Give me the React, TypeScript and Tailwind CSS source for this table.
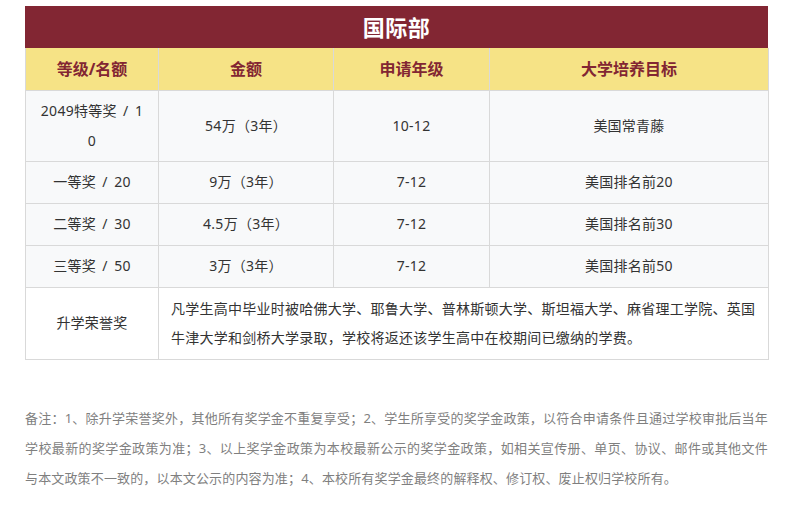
const FONT = { fontFamily: '"Noto Sans", "Noto Sans CJK SC", sans-serif' };

const ROWS = [
  { level: '2049特等奖 / 10', amount: '54万（3年）', grade: '10-12', goal: '美国常青藤', tall: true },
  { level: '一等奖 / 20', amount: '9万（3年）', grade: '7-12', goal: '美国排名前20' },
  { level: '二等奖 / 30', amount: '4.5万（3年）', grade: '7-12', goal: '美国排名前30' },
  { level: '三等奖 / 50', amount: '3万（3年）', grade: '7-12', goal: '美国排名前50' },
];

const HEADERS = ['等级/名额', '金额', '申请年级', '大学培养目标'];

export default function App() {
  return (
    <div className="min-h-screen bg-white pt-[6px]" style={FONT}>
      <div className="ml-[25px] w-[743px]">
        {/* Title bar */}
        <div className="h-[42px] bg-[#822633] flex items-center justify-center">
          <span className="text-white text-[22px] font-bold tracking-[0.5px]">国际部</span>
        </div>

        <table className="w-full table-fixed border-collapse">
          <colgroup>
            <col className="w-[133px]" />
            <col className="w-[175px]" />
            <col className="w-[156px]" />
            <col className="w-[279px]" />
          </colgroup>
          <thead>
            <tr className="bg-[#f6e386]">
              {HEADERS.map(h => (
                <th
                  key={h}
                  className="h-[42px] border border-[#d9d9d9] border-t-0 text-center text-[16px] font-bold text-[#822633] p-0"
                >
                  {h}
                </th>
              ))}
            </tr>
          </thead>
          <tbody className="text-[14px] tracking-[0.25px] [word-spacing:2.5px] text-[#333333]">
            {ROWS.map(r => (
              <tr key={r.level} className="bg-[#f8f9fa]">
                <td className={`${r.tall ? 'h-[71px]' : 'h-[42px]'} border border-[#d9d9d9] text-center align-middle px-0 py-0 leading-[30px]`}>
                  <div className="mx-auto w-[106px] break-all">{r.level}</div>
                </td>
                <td className="border border-[#d9d9d9] text-center align-middle p-0 leading-[30px]">{r.amount}</td>
                <td className="border border-[#d9d9d9] text-center align-middle p-0 leading-[30px]">{r.grade}</td>
                <td className="border border-[#d9d9d9] text-center align-middle p-0 leading-[30px]">{r.goal}</td>
              </tr>
            ))}
            <tr className="bg-white">
              <td className="h-[72px] border border-[#d9d9d9] text-center align-middle p-0 leading-[30px]">升学荣誉奖</td>
              <td colSpan={3} className="border border-[#d9d9d9] text-left align-middle px-[12px] py-0 leading-[29px]">
                凡学生高中毕业时被哈佛大学、耶鲁大学、普林斯顿大学、斯坦福大学、麻省理工学院、英国牛津大学和剑桥大学录取，学校将返还该学生高中在校期间已缴纳的学费。
              </td>
            </tr>
          </tbody>
        </table>

        {/* Notes */}
        <p className="mt-[43px] text-[13px] tracking-[0.15px] leading-[30px] text-[#7f7f7f] text-justify">
          备注：1、除升学荣誉奖外，其他所有奖学金不重复享受；2、学生所享受的奖学金政策，以符合申请条件且通过学校审批后当年学校最新的奖学金政策为准；3、以上奖学金政策为本校最新公示的奖学金政策，如相关宣传册、单页、协议、邮件或其他文件与本文政策不一致的，以本文公示的内容为准；4、本校所有奖学金最终的解释权、修订权、废止权归学校所有。
        </p>
      </div>
    </div>
  );
}
